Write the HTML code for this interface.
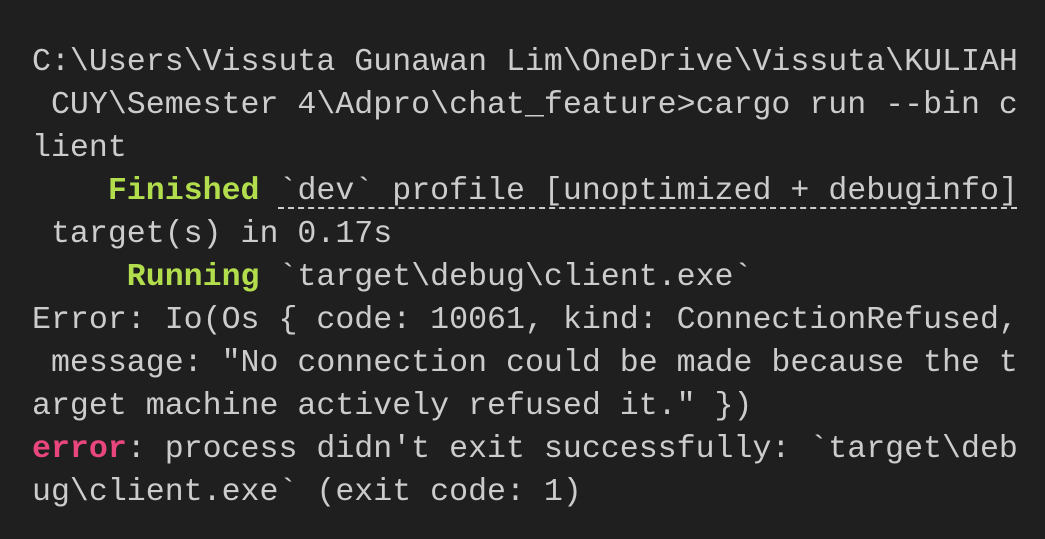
<!DOCTYPE html>
<html><head><style>
html,body{margin:0;padding:0;background:#1f1f1f;width:1045px;height:539px;overflow:hidden}
.t{position:absolute;left:32px;top:41px;font-family:"Liberation Mono",monospace;font-size:31.6px;line-height:43px;color:#cccccc;white-space:pre}
.g{color:#b2dd4c;font-weight:bold}
.e{color:#e8467c;font-weight:bold}
.u{text-decoration:underline dashed #cccccc;text-underline-offset:8px;text-decoration-thickness:2px}
</style></head><body>
<div class="t">C:\Users\Vissuta Gunawan Lim\OneDrive\Vissuta\KULIAH
 CUY\Semester 4\Adpro\chat_feature&gt;cargo run --bin c
lient
    <span class="g">Finished</span> <span class="u">`dev` profile [unoptimized + debuginfo]</span>
 target(s) in 0.17s
     <span class="g">Running</span> `target\debug\client.exe`
Error: Io(Os { code: 10061, kind: ConnectionRefused,
 message: "No connection could be made because the t
arget machine actively refused it." })
<span class="e">error</span>: process didn't exit successfully: `target\deb
ug\client.exe` (exit code: 1)</div>
</body></html>
